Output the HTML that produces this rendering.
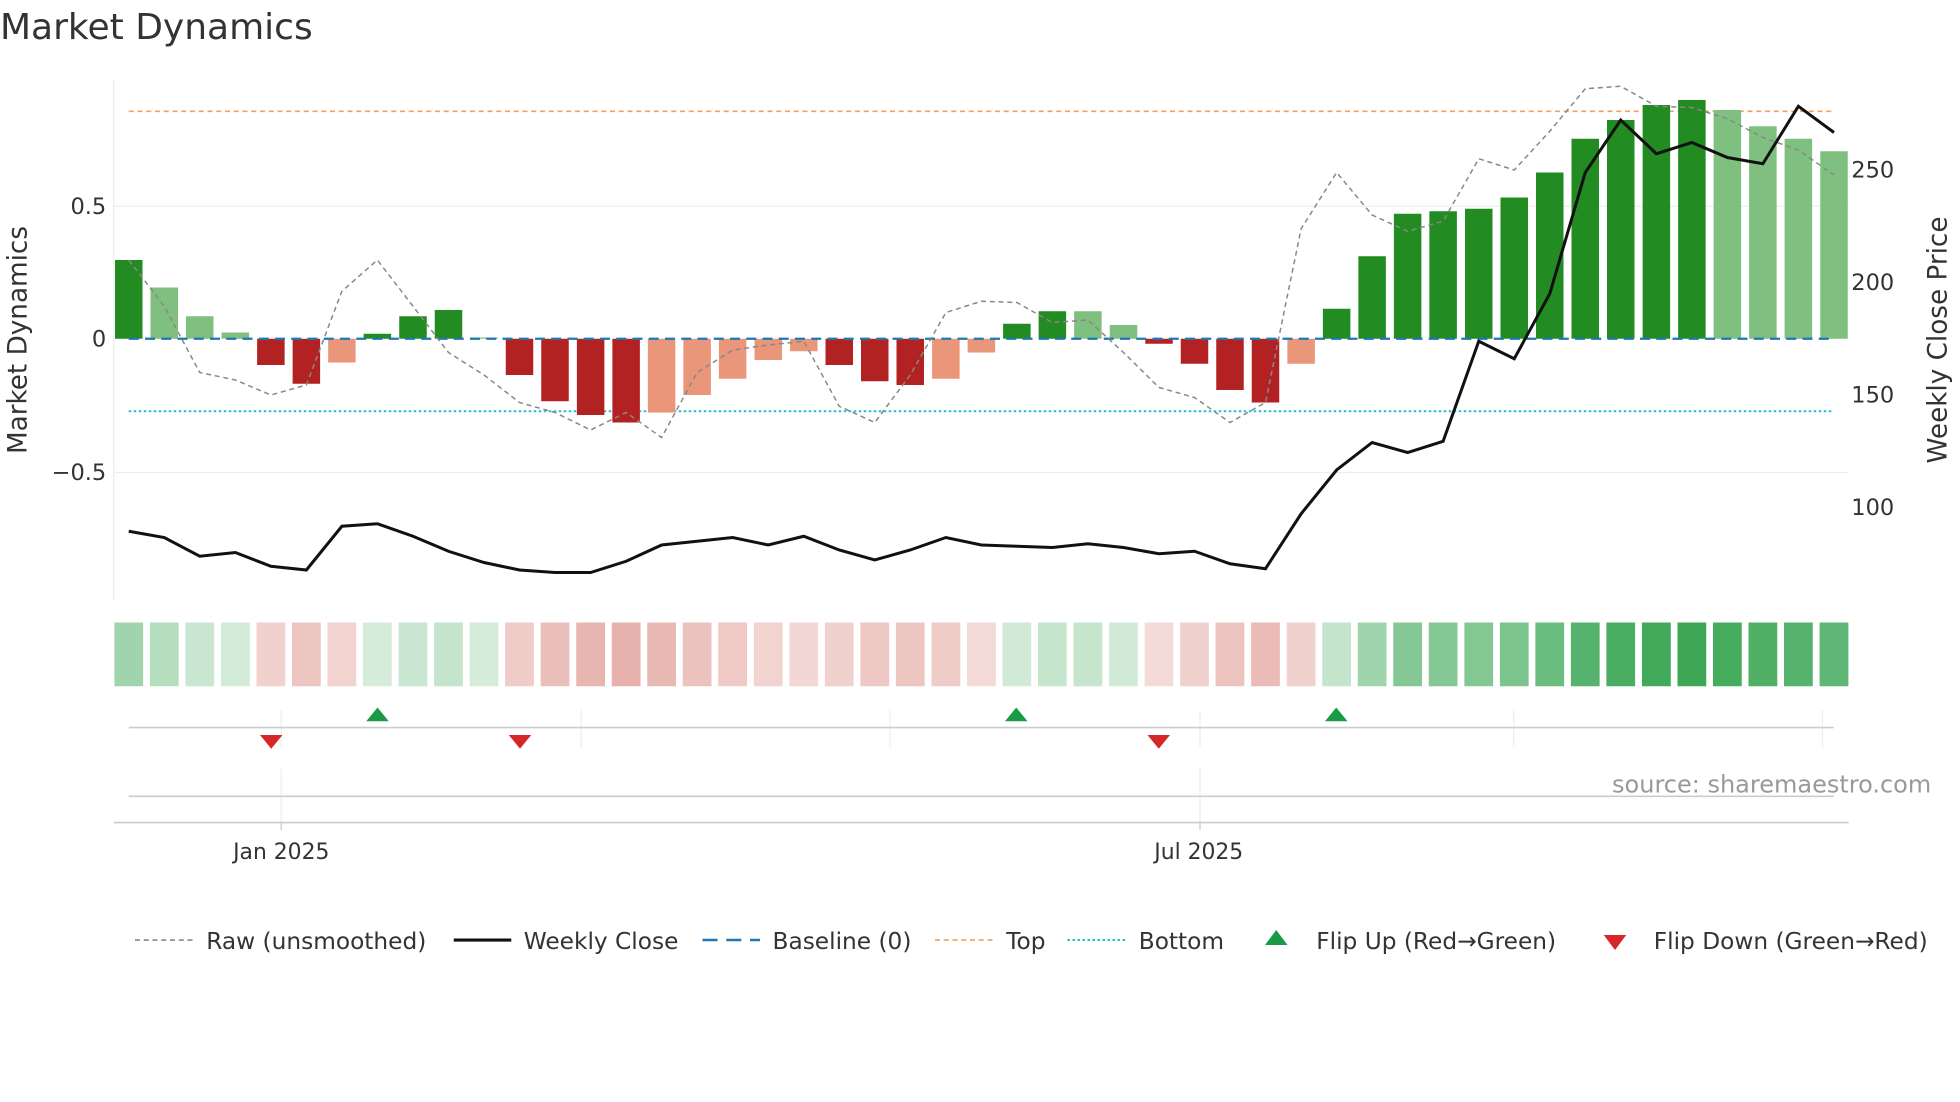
<!DOCTYPE html>
<html><head><meta charset="utf-8"><style>
html,body{margin:0;padding:0;background:#fff;width:1960px;height:1102px;overflow:hidden}
svg{display:block}
text{font-family:"DejaVu Sans","Liberation Sans",sans-serif;fill:#333}
</style></head><body>
<svg width="1960" height="1102" viewBox="0 0 1568 881.6" xmlns="http://www.w3.org/2000/svg">
<text x="0" y="31" font-size="28.8">Market Dynamics</text>
<line x1="91" y1="63" x2="91" y2="480" stroke="#eee" stroke-width="1"/>
<line x1="91" y1="165" x2="1479" y2="165" stroke="#eee"/>
<line x1="91" y1="378" x2="1479" y2="378" stroke="#eee"/>
<text x="85" y="171" font-size="18" text-anchor="end">0.5</text>
<text x="85" y="277" font-size="18" text-anchor="end">0</text>
<text x="85" y="384" font-size="18" text-anchor="end">−0.5</text>
<text x="1481" y="142" font-size="18">250</text>
<text x="1481" y="232" font-size="18">200</text>
<text x="1481" y="322" font-size="18">150</text>
<text x="1481" y="412" font-size="18">100</text>
<text transform="translate(21,272) rotate(-90)" font-size="21" text-anchor="middle">Market Dynamics</text>
<text transform="translate(1557,272) rotate(-90)" font-size="21" text-anchor="middle">Weekly Close Price</text>
<line x1="103" y1="89" x2="1467" y2="89" stroke="#f0a060" stroke-width="1.3" stroke-dasharray="4,3"/>
<line x1="103" y1="329" x2="1467" y2="329" stroke="#20c0d0" stroke-width="1.6" stroke-dasharray="2,2"/>
<g>
<rect x="92" y="208" width="22" height="63" fill="#228b22"/>
<rect x="120.4" y="230" width="22" height="41" fill="#7fbf7f"/>
<rect x="148.8" y="253" width="22" height="18" fill="#7fbf7f"/>
<rect x="177.3" y="266" width="22" height="5" fill="#7fbf7f"/>
<rect x="205.7" y="271" width="22" height="21" fill="#b22222"/>
<rect x="234.1" y="271" width="22" height="36" fill="#b22222"/>
<rect x="262.5" y="271" width="22" height="19" fill="#e9967a"/>
<rect x="290.9" y="267" width="22" height="4" fill="#228b22"/>
<rect x="319.4" y="253" width="22" height="18" fill="#228b22"/>
<rect x="347.8" y="248" width="22" height="23" fill="#228b22"/>
<rect x="376.2" y="270" width="22" height="1" fill="#7fbf7f"/>
<rect x="404.6" y="271" width="22" height="29" fill="#b22222"/>
<rect x="433" y="271" width="22" height="50" fill="#b22222"/>
<rect x="461.5" y="271" width="22" height="61" fill="#b22222"/>
<rect x="489.9" y="271" width="22" height="67" fill="#b22222"/>
<rect x="518.3" y="271" width="22" height="59" fill="#e9967a"/>
<rect x="546.7" y="271" width="22" height="45" fill="#e9967a"/>
<rect x="575.1" y="271" width="22" height="32" fill="#e9967a"/>
<rect x="603.6" y="271" width="22" height="17" fill="#e9967a"/>
<rect x="632" y="271" width="22" height="10" fill="#e9967a"/>
<rect x="660.4" y="271" width="22" height="21" fill="#b22222"/>
<rect x="688.8" y="271" width="22" height="34" fill="#b22222"/>
<rect x="717.2" y="271" width="22" height="37" fill="#b22222"/>
<rect x="745.7" y="271" width="22" height="32" fill="#e9967a"/>
<rect x="774.1" y="271" width="22" height="11" fill="#e9967a"/>
<rect x="802.5" y="259" width="22" height="12" fill="#228b22"/>
<rect x="830.9" y="249" width="22" height="22" fill="#228b22"/>
<rect x="859.3" y="249" width="22" height="22" fill="#7fbf7f"/>
<rect x="887.8" y="260" width="22" height="11" fill="#7fbf7f"/>
<rect x="916.2" y="271" width="22" height="4" fill="#b22222"/>
<rect x="944.6" y="271" width="22" height="20" fill="#b22222"/>
<rect x="973" y="271" width="22" height="41" fill="#b22222"/>
<rect x="1001.4" y="271" width="22" height="51" fill="#b22222"/>
<rect x="1029.9" y="271" width="22" height="20" fill="#e9967a"/>
<rect x="1058.3" y="247" width="22" height="24" fill="#228b22"/>
<rect x="1086.7" y="205" width="22" height="66" fill="#228b22"/>
<rect x="1115.1" y="171" width="22" height="100" fill="#228b22"/>
<rect x="1143.5" y="169" width="22" height="102" fill="#228b22"/>
<rect x="1172" y="167" width="22" height="104" fill="#228b22"/>
<rect x="1200.4" y="158" width="22" height="113" fill="#228b22"/>
<rect x="1228.8" y="138" width="22" height="133" fill="#228b22"/>
<rect x="1257.2" y="111" width="22" height="160" fill="#228b22"/>
<rect x="1285.6" y="96" width="22" height="175" fill="#228b22"/>
<rect x="1314.1" y="84" width="22" height="187" fill="#228b22"/>
<rect x="1342.5" y="80" width="22" height="191" fill="#228b22"/>
<rect x="1370.9" y="88" width="22" height="183" fill="#7fbf7f"/>
<rect x="1399.3" y="101" width="22" height="170" fill="#7fbf7f"/>
<rect x="1427.7" y="111" width="22" height="160" fill="#7fbf7f"/>
<rect x="1456.2" y="121" width="22" height="150" fill="#7fbf7f"/>
</g>
<line x1="103" y1="271" x2="1467" y2="271" stroke="#1f77b4" stroke-width="1.8" stroke-dasharray="8,5"/>
<polyline fill="none" stroke="#888" stroke-width="1.2" stroke-dasharray="4,3" points="103,208 131.4,245 159.8,298 188.3,304 216.7,316 245.1,308 273.5,233 301.9,208 330.4,245 358.8,282 387.2,300 415.6,322 444,330 472.5,344 500.9,330 529.3,350 557.7,298 586.1,280 614.6,276 643,273 671.4,325 699.8,338 728.2,300 756.7,250 785.1,241 813.5,242 841.9,258 870.3,256 898.8,282 927.2,310 955.6,318 984,338 1012.4,322 1040.9,183 1069.3,138 1097.7,172 1126.1,185 1154.5,177 1183,127 1211.4,136 1239.8,105 1268.2,71 1296.6,69 1325.1,85 1353.5,86 1381.9,95 1410.3,110 1438.7,120 1467.2,140"/>
<polyline fill="none" stroke="#111" stroke-width="2.4" points="103,425 131.4,430 159.8,445 188.3,442 216.7,453 245.1,456 273.5,421 301.9,419 330.4,429 358.8,441 387.2,450 415.6,456 444,458 472.5,458 500.9,449 529.3,436 557.7,433 586.1,430 614.6,436 643,429 671.4,440 699.8,448 728.2,440 756.7,430 785.1,436 813.5,437 841.9,438 870.3,435 898.8,438 927.2,443 955.6,441 984,451 1012.4,455 1040.9,411 1069.3,376 1097.7,354 1126.1,362 1154.5,353 1183,273 1211.4,287 1239.8,235 1268.2,138 1296.6,96 1325.1,123 1353.5,114 1381.9,126 1410.3,131 1438.7,85 1467.2,106"/>
<g>
<rect x="91.5" y="498" width="23" height="51" fill="#2ca048" fill-opacity=".45"/>
<rect x="119.9" y="498" width="23" height="51" fill="#2ca048" fill-opacity=".35"/>
<rect x="148.3" y="498" width="23" height="51" fill="#2ca048" fill-opacity=".26"/>
<rect x="176.8" y="498" width="23" height="51" fill="#2ca048" fill-opacity=".21"/>
<rect x="205.2" y="498" width="23" height="51" fill="#c0392b" fill-opacity=".23"/>
<rect x="233.6" y="498" width="23" height="51" fill="#c0392b" fill-opacity=".29"/>
<rect x="262" y="498" width="23" height="51" fill="#c0392b" fill-opacity=".22"/>
<rect x="290.4" y="498" width="23" height="51" fill="#2ca048" fill-opacity=".2"/>
<rect x="318.9" y="498" width="23" height="51" fill="#2ca048" fill-opacity=".26"/>
<rect x="347.3" y="498" width="23" height="51" fill="#2ca048" fill-opacity=".28"/>
<rect x="375.7" y="498" width="23" height="51" fill="#2ca048" fill-opacity=".2"/>
<rect x="404.1" y="498" width="23" height="51" fill="#c0392b" fill-opacity=".26"/>
<rect x="432.5" y="498" width="23" height="51" fill="#c0392b" fill-opacity=".33"/>
<rect x="461" y="498" width="23" height="51" fill="#c0392b" fill-opacity=".37"/>
<rect x="489.4" y="498" width="23" height="51" fill="#c0392b" fill-opacity=".39"/>
<rect x="517.8" y="498" width="23" height="51" fill="#c0392b" fill-opacity=".36"/>
<rect x="546.2" y="498" width="23" height="51" fill="#c0392b" fill-opacity=".31"/>
<rect x="574.6" y="498" width="23" height="51" fill="#c0392b" fill-opacity=".27"/>
<rect x="603.1" y="498" width="23" height="51" fill="#c0392b" fill-opacity=".22"/>
<rect x="631.5" y="498" width="23" height="51" fill="#c0392b" fill-opacity=".2"/>
<rect x="659.9" y="498" width="23" height="51" fill="#c0392b" fill-opacity=".23"/>
<rect x="688.3" y="498" width="23" height="51" fill="#c0392b" fill-opacity=".28"/>
<rect x="716.7" y="498" width="23" height="51" fill="#c0392b" fill-opacity=".29"/>
<rect x="745.2" y="498" width="23" height="51" fill="#c0392b" fill-opacity=".26"/>
<rect x="773.6" y="498" width="23" height="51" fill="#c0392b" fill-opacity=".19"/>
<rect x="802" y="498" width="23" height="51" fill="#2ca048" fill-opacity=".22"/>
<rect x="830.4" y="498" width="23" height="51" fill="#2ca048" fill-opacity=".27"/>
<rect x="858.8" y="498" width="23" height="51" fill="#2ca048" fill-opacity=".27"/>
<rect x="887.3" y="498" width="23" height="51" fill="#2ca048" fill-opacity=".22"/>
<rect x="915.7" y="498" width="23" height="51" fill="#c0392b" fill-opacity=".18"/>
<rect x="944.1" y="498" width="23" height="51" fill="#c0392b" fill-opacity=".23"/>
<rect x="972.5" y="498" width="23" height="51" fill="#c0392b" fill-opacity=".3"/>
<rect x="1000.9" y="498" width="23" height="51" fill="#c0392b" fill-opacity=".34"/>
<rect x="1029.4" y="498" width="23" height="51" fill="#c0392b" fill-opacity=".23"/>
<rect x="1057.8" y="498" width="23" height="51" fill="#2ca048" fill-opacity=".28"/>
<rect x="1086.2" y="498" width="23" height="51" fill="#2ca048" fill-opacity=".45"/>
<rect x="1114.6" y="498" width="23" height="51" fill="#2ca048" fill-opacity=".58"/>
<rect x="1143" y="498" width="23" height="51" fill="#2ca048" fill-opacity=".58"/>
<rect x="1171.5" y="498" width="23" height="51" fill="#2ca048" fill-opacity=".59"/>
<rect x="1199.9" y="498" width="23" height="51" fill="#2ca048" fill-opacity=".62"/>
<rect x="1228.3" y="498" width="23" height="51" fill="#2ca048" fill-opacity=".7"/>
<rect x="1256.7" y="498" width="23" height="51" fill="#2ca048" fill-opacity=".8"/>
<rect x="1285.1" y="498" width="23" height="51" fill="#2ca048" fill-opacity=".86"/>
<rect x="1313.6" y="498" width="23" height="51" fill="#2ca048" fill-opacity=".9"/>
<rect x="1342" y="498" width="23" height="51" fill="#2ca048" fill-opacity=".92"/>
<rect x="1370.4" y="498" width="23" height="51" fill="#2ca048" fill-opacity=".88"/>
<rect x="1398.8" y="498" width="23" height="51" fill="#2ca048" fill-opacity=".84"/>
<rect x="1427.2" y="498" width="23" height="51" fill="#2ca048" fill-opacity=".8"/>
<rect x="1455.7" y="498" width="23" height="51" fill="#2ca048" fill-opacity=".76"/>
</g>
<g stroke="#eee" stroke-width="1">
<line x1="225" y1="568" x2="225" y2="598"/><line x1="465" y1="568" x2="465" y2="598"/>
<line x1="712" y1="568" x2="712" y2="598"/><line x1="960" y1="568" x2="960" y2="598"/>
<line x1="1211" y1="568" x2="1211" y2="598"/><line x1="1458" y1="568" x2="1458" y2="598"/>
<line x1="225" y1="615" x2="225" y2="662"/><line x1="960" y1="615" x2="960" y2="662"/>
</g>
<line x1="103" y1="582" x2="1467" y2="582" stroke="#ccc" stroke-width="1.3"/>
<line x1="103" y1="637" x2="1467" y2="637" stroke="#ccc" stroke-width="1.3"/>
<line x1="91" y1="658" x2="1479" y2="658" stroke="#ccc" stroke-width="1.3"/>
<line x1="225" y1="658" x2="225" y2="664" stroke="#ccc"/>
<line x1="960" y1="658" x2="960" y2="664" stroke="#ccc"/>
<g fill="#1a9a45">
<polygon points="302,566 293,577 311,577"/><polygon points="813,566 804,577 822,577"/><polygon points="1069,566 1060,577 1078,577"/>
</g>
<g fill="#d62728">
<polygon points="217,599 208,588 226,588"/><polygon points="416,599 407,588 425,588"/><polygon points="927,599 918,588 936,588"/>
</g>
<text x="1545" y="634" font-size="19.2" text-anchor="end" style="fill:#999">source: sharemaestro.com</text>
<text x="225" y="687" font-size="17.5" text-anchor="middle">Jan 2025</text>
<text x="959" y="687" font-size="17.5" text-anchor="middle">Jul 2025</text>
<g font-size="18.6">
<line x1="108" y1="752" x2="154" y2="752" stroke="#888" stroke-width="1.3" stroke-dasharray="4,3"/>
<text x="165" y="759">Raw (unsmoothed)</text>
<line x1="363" y1="752" x2="409" y2="752" stroke="#111" stroke-width="2.5"/>
<text x="419" y="759">Weekly Close</text>
<line x1="562" y1="752" x2="608" y2="752" stroke="#1f77b4" stroke-width="2" stroke-dasharray="12,7"/>
<text x="618" y="759">Baseline (0)</text>
<line x1="748" y1="752" x2="794" y2="752" stroke="#f0a060" stroke-width="1.3" stroke-dasharray="4,3"/>
<text x="805" y="759">Top</text>
<line x1="854" y1="752" x2="900" y2="752" stroke="#20c0d0" stroke-width="1.6" stroke-dasharray="2,2"/>
<text x="911" y="759">Bottom</text>
<polygon points="1021,744 1012,756 1030,756" fill="#1a9a45"/>
<text x="1053" y="759">Flip Up (Red→Green)</text>
<polygon points="1292,760 1283,748 1301,748" fill="#d62728"/>
<text x="1323" y="759">Flip Down (Green→Red)</text>
</g>
</svg>
</body></html>
